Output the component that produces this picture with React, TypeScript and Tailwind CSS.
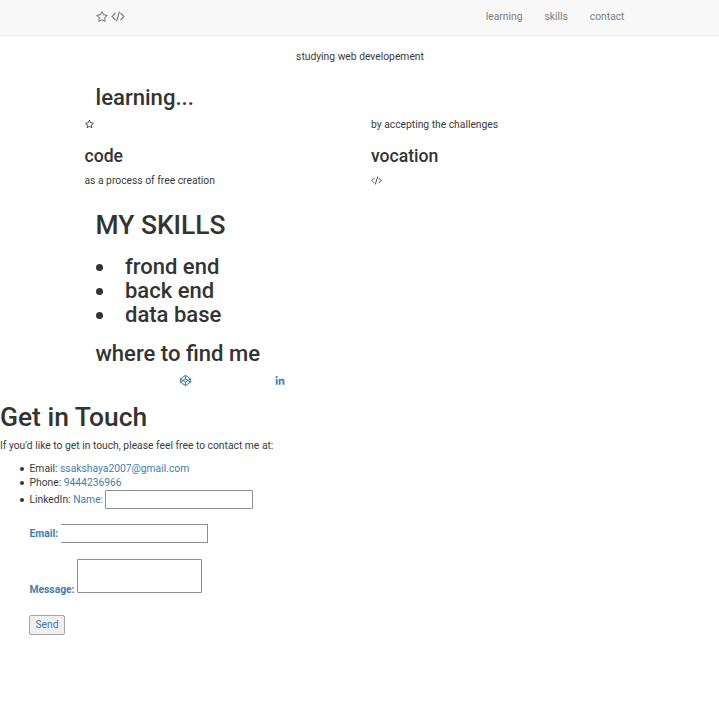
import type { ReactNode } from "react";
import { FaCodepen, FaLinkedinIn, FaRegStar } from "react-icons/fa";

function CodeIcon({ className }: { className: string }) {
  return (
    <svg viewBox="0 0 28 22" className={className} fill="none" stroke="currentColor" strokeWidth="2.2">
      <path d="M9 4 2 11l7 7M19 4l7 7-7 7M17 1l-6 20" />
    </svg>
  );
}

function Skill({ children }: { children: ReactNode }) {
  return (
    <li className="flex h-6 items-center">
      <span className="mr-[22.5px] size-[7px] rounded-full bg-[#333]" />
      {children}
    </li>
  );
}

function ContactItem({ children }: { children: ReactNode }) {
  return (
    <li className="flex items-center">
      <span className="mr-[5.5px] size-1 shrink-0 rounded-full bg-[#333]" />
      {children}
    </li>
  );
}

export default function App() {
  return (
    <div className="min-h-[721px] w-full overflow-hidden bg-white font-[Roboto,sans-serif] text-[10.3px] leading-[14px] text-[#3a3a3a]">
      <nav className="flex h-9 items-start justify-between border-b border-[#ececec] bg-[#f8f8f8] pt-[10px] pr-[94.5px] pl-[95.5px] text-[#7c7c7c]">
        <div className="-mt-px flex h-[14px] items-center">
          <FaRegStar className="h-[13px] w-[12px]" />
          <CodeIcon className="ml-[3px] h-[11px] w-[14px]" />
        </div>
        <div className="flex gap-[22px]">
          <a>learning</a>
          <a>skills</a>
          <a>contact</a>
        </div>
      </nav>

      <p className="mt-[14px] pl-px text-center">studying web developement</p>

      <h2 className="mt-[19px] ml-[95.5px] h-[29px] text-[22.1px] leading-[28px] font-medium text-[#333]">learning...</h2>

      <section className="mt-[6px] ml-[84.5px] grid grid-cols-[286.5px_1fr]">
        <div>
          <div className="flex h-[14px] items-start pt-px">
            <FaRegStar className="h-[10px] w-[9px]" />
          </div>
          <h3 className="mt-[14px] h-5 text-[17.6px] leading-5 font-medium text-[#333]">code</h3>
          <p className="mt-[8px]">as a process of free creation</p>
        </div>
        <div>
          <p>by accepting the challenges</p>
          <h3 className="mt-[14px] h-5 text-[17.6px] leading-5 font-medium text-[#333]">vocation</h3>
          <div className="mt-[8px] flex h-[14px] items-start pt-[2px]">
            <CodeIcon className="h-[9px] w-[11px]" />
          </div>
        </div>
      </section>

      <section className="ml-[95.5px] text-[#333]">
        <h1 className="mt-[21px] h-8 text-[26.4px] leading-8 font-medium">MY SKILLS</h1>
        <ul className="mt-[14px] text-[22px] leading-6 font-medium">
          <Skill>frond end</Skill>
          <Skill>back end</Skill>
          <Skill>data base</Skill>
        </ul>
        <h2 className="mt-[13px] h-7 text-[22.05px] leading-7 font-medium">where to find me</h2>
        <div className="mt-[5px] flex h-[14px] items-center pl-[84.5px] text-[#3d7eb2]">
          <FaCodepen className="size-[11px]" />
          <FaLinkedinIn className="mt-px ml-[84px] size-[10px]" />
        </div>
      </section>

      <h1 className="mt-[14px] h-8 text-[26.4px] leading-8 font-medium text-[#333]">Get in Touch</h1>
      <p className="mt-[6px]">If you'd like to get in touch, please feel free to contact me at:</p>

      <ul className="mt-[9px] ml-5">
        <ContactItem>
          Email:&nbsp;<a className="text-[#3d7eb2]">ssakshaya2007@gmail.com</a>
        </ContactItem>
        <ContactItem>
          Phone:&nbsp;<a className="text-[#3d7eb2]">9444236966</a>
        </ContactItem>
        <ContactItem>
          LinkedIn:&nbsp;<label className="text-[#3d7eb2]">Name:</label>
          <input className="ml-[2px] h-[19px] w-[148px] rounded-[1px] border border-[#8f8f8f] bg-white" />
        </ContactItem>
      </ul>

      <form className="ml-[29px] text-[#3d7eb2]">
        <div className="mt-[15px] flex h-[19px] items-center">
          <label className="w-8 pl-[0.5px] font-bold">Email:</label>
          <input className="h-[19px] w-[147px] border border-l-0 border-[#8f8f8f] bg-white" />
        </div>
        <div className="mt-4 flex h-[38px] items-start">
          <label className="w-12 pt-[24px] pl-[0.5px] font-bold">Message:</label>
          <textarea className="h-[34px] w-[125px] resize-none rounded-[1px] border border-[#8f8f8f] bg-white" />
        </div>
        <button type="button" className="mt-[18px] flex h-5 w-9 items-center justify-center rounded-[2px] border border-[#a5a5a5] bg-[#efefef] pb-px">
          Send
        </button>
      </form>
    </div>
  );
}
